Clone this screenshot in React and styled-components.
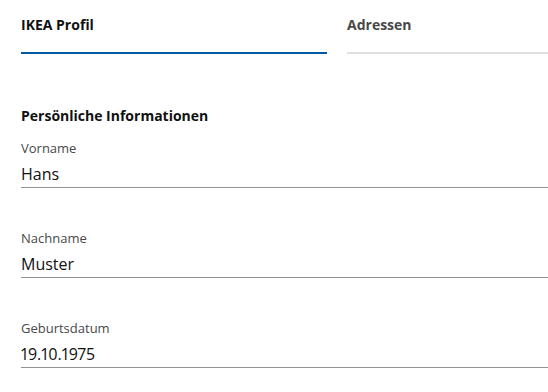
import styled, { createGlobalStyle } from 'styled-components';

const GlobalStyle = createGlobalStyle`
  body {
    margin: 0;
    background: #fff;
    font-family: "Open Sans", "Noto Sans", sans-serif;
    color: #111111;
  }
`;

const Page = styled.div`
  padding-left: 21px;
  overflow: hidden;
`;

const Tabs = styled.div`
  display: flex;
  gap: 20px;
`;

const Tab = styled.div`
  flex: ${(p) => (p.$active ? '0 0 306px' : '1')};
  padding: 15px 0 17px;
  font-size: 14px;
  line-height: 20px;
  font-weight: 700;
  color: ${(p) => (p.$active ? '#111111' : '#484848')};
  border-bottom: 2px solid ${(p) => (p.$active ? '#0058a3' : '#dfdfdf')};
`;

const Section = styled.section`
  margin-top: 52px;
`;

const Heading = styled.h2`
  margin: 0 0 13px;
  font-size: 14px;
  line-height: 20px;
  font-weight: 700;
  color: #111111;
`;

const Field = styled.div`
  display: flex;
  flex-direction: column;
  gap: 5px;
  margin-bottom: 41px;
`;

const Label = styled.label`
  font-size: 13px;
  line-height: 18px;
  color: #484848;
`;

const Value = styled.div`
  font-size: 16px;
  line-height: 24px;
  padding-bottom: 1px;
  color: #111111;
  font-variant-numeric: proportional-nums;
  border-bottom: 1px solid #929292;
`;

const fields = [
  { label: 'Vorname', value: 'Hans' },
  { label: 'Nachname', value: 'Muster' },
  { label: 'Geburtsdatum', value: '19.10.1975' },
];

export default function App() {
  return (
    <>
      <GlobalStyle />
      <Page>
        <Tabs>
          <Tab $active>IKEA Profil</Tab>
          <Tab>Adressen</Tab>
        </Tabs>
        <Section>
          <Heading>Persönliche Informationen</Heading>
          {fields.map((f) => (
            <Field key={f.label}>
              <Label>{f.label}</Label>
              <Value>{f.value}</Value>
            </Field>
          ))}
        </Section>
      </Page>
    </>
  );
}
